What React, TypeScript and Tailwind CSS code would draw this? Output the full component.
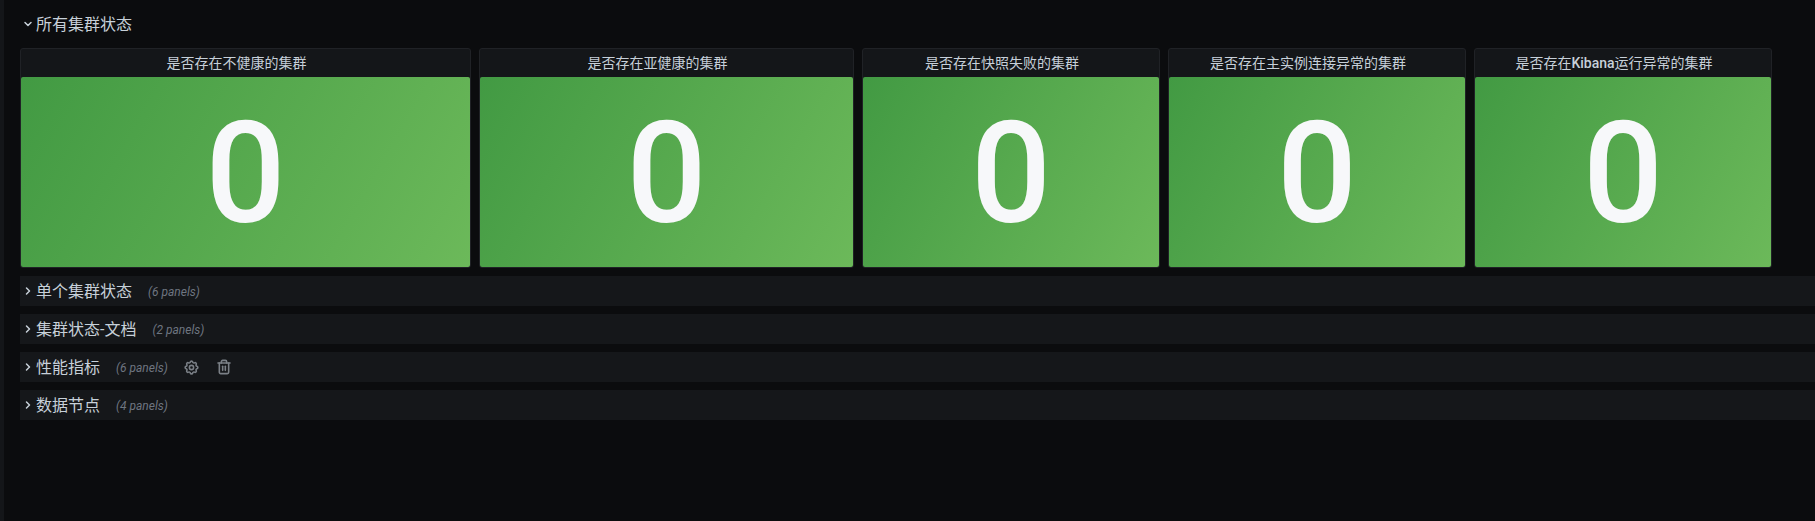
import React from 'react'
import { ChevronDown, ChevronRight, Trash2 } from 'lucide-react'
import { TbSettings } from 'react-icons/tb'

const font = { fontFamily: 'Roboto, "Noto Sans CJK SC", sans-serif' }

const stats: { title: React.ReactNode; width: string }[] = [
  { title: '是否存在不健康的集群', width: 'w-[451px]' },
  { title: '是否存在亚健康的集群', width: 'w-[375px]' },
  { title: '是否存在快照失败的集群', width: 'w-[298px]' },
  { title: '是否存在主实例连接异常的集群', width: 'w-[298px]' },
  {
    title: (
      <>
        是否存在<span className="font-medium">Kibana</span>运行异常的集群
      </>
    ),
    width: 'w-[298px]',
  },
]

const rows = [
  { title: '单个集群状态', count: 6 },
  { title: '集群状态-文档', count: 2 },
  { title: '性能指标', count: 6, actions: true },
  { title: '数据节点', count: 4 },
]

const StatPanel: React.FC<{ title: React.ReactNode; width: string }> = ({ title, width }) => (
  <div className={`${width} h-[220px] flex flex-col rounded-[3px] border border-[#202226] bg-[#141619]`}>
    <div className="h-[28px] shrink-0 flex items-center justify-center pr-[18px] text-sm text-[#c7d0d9]">
      <span>{title}</span>
    </div>
    <div className="flex-1 flex items-center justify-center rounded-[2px] bg-[linear-gradient(120deg,#429a43,#6cb95a)] pt-[2px] text-[141px] font-medium leading-none text-[#f7f8fa]">
      0
    </div>
  </div>
)

export default function App() {
  return (
    <div className="h-[521px] w-[1815px] overflow-hidden flex bg-[#0b0c0e]" style={font}>
      <div className="w-[4px] shrink-0 bg-[#141619]" />
      <div className="flex-1 min-w-0 pl-[16px] pt-[8px]">
        {/* Open row */}
        <div className="h-[32px] flex items-center text-base text-[#c7d0d9]">
          <ChevronDown size={12} strokeWidth={3} className="ml-[2px] mr-[2px]" />
          <span className="pt-[1px]">所有集群状态</span>
        </div>

        {/* Stat panels */}
        <div className="flex gap-[8px] mt-[8px]">
          {stats.map((stat) => (
            <StatPanel key={stat.width + String(stat.title)} title={stat.title} width={stat.width} />
          ))}
        </div>

        {/* Collapsed rows */}
        <div className="flex flex-col gap-[8px] mt-[8px]">
          {rows.map((row) => (
            <div key={row.title} className="h-[30px] flex items-center bg-[#15171a] text-base text-[#c7d0d9]">
              <ChevronRight size={12} strokeWidth={3} className="ml-[2px] mr-[2px]" />
              <span className="pt-[1px]">{row.title}</span>
              <span className="ml-[16px] pt-[1px] text-xs italic text-[#6e7580]">({row.count} panels)</span>
              {row.actions && (
                <div className="flex items-center ml-[15px] gap-[16px] text-[#7b8087]">
                  <TbSettings size={17} strokeWidth={2.2} />
                  <Trash2 size={16} strokeWidth={2.4} />
                </div>
              )}
            </div>
          ))}
        </div>
      </div>
    </div>
  )
}
